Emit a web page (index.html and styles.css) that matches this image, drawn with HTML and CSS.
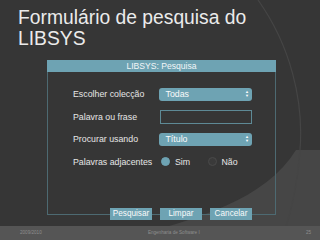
FILE: index.html
```html
<!DOCTYPE html>
<html lang="pt">
<head>
<meta charset="utf-8">
<title>Formulário de pesquisa do LIBSYS</title>
<link rel="stylesheet" href="styles.css">
</head>
<body>
<div class="slide">
  <svg class="bg" width="320" height="240" viewBox="0 0 320 240" aria-hidden="true">
    <rect x="0" y="0" width="320" height="240" fill="#363636"/>
    <path d="M120 240 C 200 218, 265 200, 296 150 L 320 150 L 320 240 Z" fill="#464646"/>
    <path d="M258 0 C 290 45, 304 100, 300 150 C 297 190, 290 215, 282 240" fill="none" stroke="#454545" stroke-width="1.2"/>
    <rect x="0" y="226" width="320" height="14" fill="#555555"/>
  </svg>
  <h1 class="title">Formulário de pesquisa do LIBSYS</h1>
  <div class="dialog">
    <div class="dialog-head">LIBSYS: Pesquisa</div>
    <div class="form">
      <div class="row">
        <span class="label">Escolher colecção</span>
        <div class="select"><span>Todas</span><span class="arrows">▲<br>▼</span></div>
      </div>
      <div class="row">
        <span class="label">Palavra ou frase</span>
        <div class="input"></div>
      </div>
      <div class="row">
        <span class="label">Procurar usando</span>
        <div class="select"><span>Título</span><span class="arrows">▲<br>▼</span></div>
      </div>
      <div class="row">
        <span class="label">Palavras adjacentes</span>
        <div class="radios">
          <span class="radio"><span class="dot on"></span>Sim</span>
          <span class="radio"><span class="dot"></span>Não</span>
        </div>
      </div>
    </div>
    <div class="buttons">
      <span class="btn">Pesquisar</span>
      <span class="btn">Limpar</span>
      <span class="btn">Cancelar</span>
    </div>
  </div>
  <div class="footer">
    <span>2009/2010</span>
    <span>Engenharia de Software I</span>
    <span>25</span>
  </div>
</div>
</body>
</html>
```
FILE: styles.css
```css
* { box-sizing: border-box; }
html, body { margin: 0; padding: 0; background: #363636; }
.slide {
  position: relative;
  width: 320px;
  height: 240px;
  overflow: hidden;
  font-family: "Liberation Sans", Arial, sans-serif;
  display: flex;
  flex-direction: column;
}
.bg { position: absolute; left: 0; top: 0; z-index: 0; }
.title, .dialog, .footer { position: relative; z-index: 1; }
.title {
  margin: 0;
  padding: 7px 60px 0 18px;
  font-weight: normal;
  font-size: 19.3px;
  line-height: 21px;
  color: #ebebeb;
  height: 60px;
}
.dialog {
  margin-left: 47px;
  width: 229px;
  height: 155px;
  border: 1px solid #4d6a72;
  border-top: none;
  display: flex;
  flex-direction: column;
}
.dialog-head {
  height: 12px;
  background: #6ea3b3;
  color: #f2f6f7;
  font-size: 8.6px;
  line-height: 12px;
  text-align: center;
  margin: 0 -1px;
}
.form {
  padding: 15px 23px 0 25px;
  display: flex;
  flex-direction: column;
}
.row {
  display: flex;
  align-items: center;
  height: 14px;
  margin-bottom: 8.6px;
}
.label {
  width: 87px;
  font-size: 8.8px;
  color: #e6e6e6;
}
.select {
  width: 93px;
  height: 13px;
  border-radius: 3px;
  background: #6ea3b3;
  color: #fafafa;
  font-size: 8.8px;
  display: flex;
  align-items: center;
  justify-content: space-between;
  padding: 0 3px 0 6px;
}
.arrows {
  font-size: 4px;
  line-height: 4px;
  text-align: center;
  color: #ffffff;
}
.input {
  width: 93px;
  height: 14px;
  border: 1px solid #5e8a96;
}
.radios {
  display: flex;
  width: 93px;
  font-size: 8.8px;
  color: #e6e6e6;
}
.radio {
  display: flex;
  align-items: center;
  width: 58px;
}
.dot {
  width: 9px;
  height: 9px;
  border-radius: 50%;
  background: #3a3a3a;
  border: 1px solid #4a4a4a;
  margin: 0 5px 0 2px;
}
.dot.on { background: #6ea3b3; border-color: #6ea3b3; }
.buttons {
  display: flex;
  gap: 8px;
  padding: 31px 0 0 62px;
}
.btn {
  width: 42px;
  height: 12px;
  background: #6ea3b3;
  color: #fafafa;
  font-size: 8.2px;
  line-height: 12px;
  text-align: center;
}
.footer {
  margin-top: auto;
  height: 14px;
  display: flex;
  justify-content: space-between;
  align-items: center;
  padding: 0 9px 1px 20px;
  font-size: 4.6px;
  color: #8e8e8e;
}
```
